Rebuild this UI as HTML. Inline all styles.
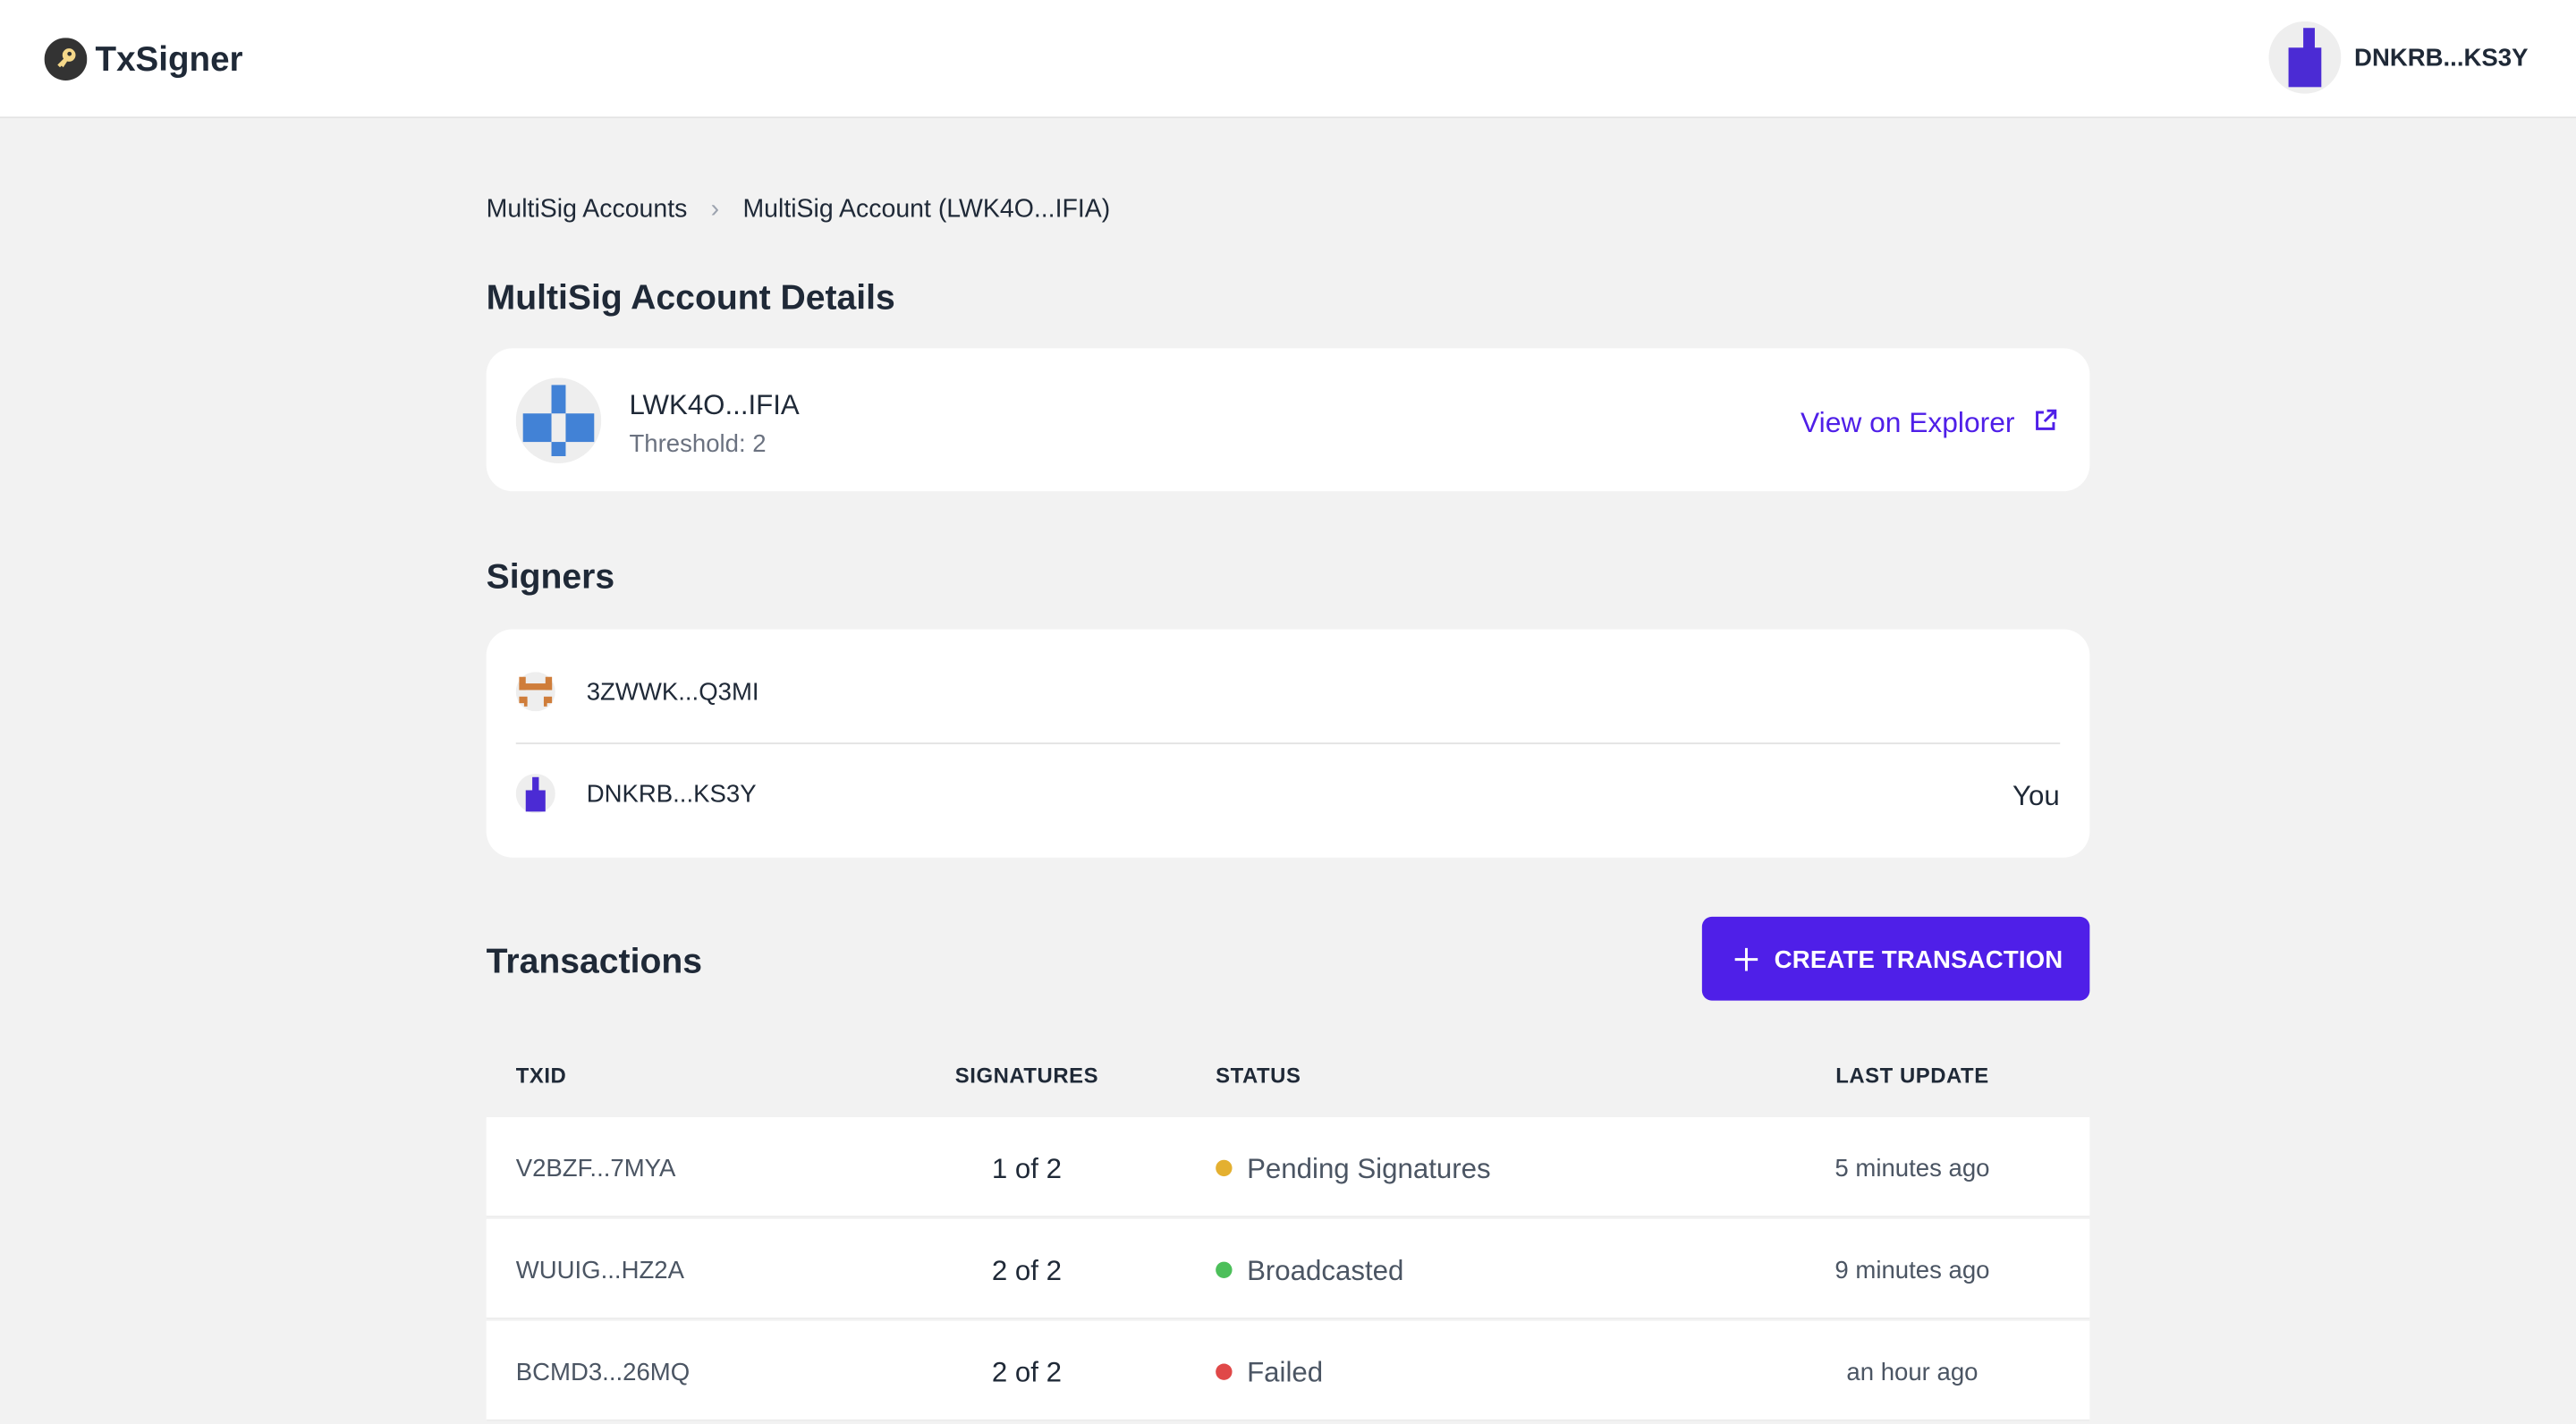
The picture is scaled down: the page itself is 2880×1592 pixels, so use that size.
<!DOCTYPE html>
<html><head><meta charset="utf-8"><style>
*{margin:0;padding:0;box-sizing:border-box}
html,body{width:2880px;height:1592px;overflow:hidden;background:#f2f2f2;font-family:"Liberation Sans",sans-serif;color:#1f2937}
#w{position:absolute;left:0;top:0;width:1568px;height:867px;transform:scale(1.836735);transform-origin:0 0}
.a{position:absolute}
.hdr{left:0;top:0;width:1568px;height:72px;background:#fff;border-bottom:1px solid #e3e3e3}
.card{background:#fff;border-radius:16px}
.h2{font-size:21.3px;font-weight:bold;color:#1f2937}
.th{font-size:13px;font-weight:bold;letter-spacing:.3px;color:#1f2937}
.row{left:296px;width:976px;height:61px;background:#fff;border-bottom:1px solid #ececec}
.row div{position:absolute;top:1px;line-height:61px}
.tx{left:18px;font-size:15px;color:#4b5563}
.sg{left:260px;width:138px;text-align:center;font-size:17px}
.st{left:444px;font-size:17px;color:#4b5563}
.st i{display:inline-block;width:10px;height:10px;border-radius:50%;margin-right:9px;vertical-align:1px}
.lu{left:790px;width:156px;text-align:center;font-size:15px;color:#4b5563}
</style></head><body><div id="w">
<div class="a hdr"></div>
<svg class="a" style="left:27px;top:23px" width="26" height="26" viewBox="0 0 26 26"><circle cx="13" cy="13" r="13" fill="#333"/><circle cx="15" cy="10.5" r="4" fill="#f5d88a"/><circle cx="15.3" cy="9.8" r="1.3" fill="#333"/><path d="M12.5 12 L8 16.5 L9.5 18 L10.5 17 L11.5 18 L13.8 14.5Z" fill="#f5d88a"/></svg>
<div class="a" style="left:58px;top:25px;font-size:21px;font-weight:bold;color:#1f2937">TxSigner</div>
<svg class="a" style="left:1381px;top:13px" width="44" height="44" viewBox="0 0 44 44"><circle cx="22" cy="22" r="22" fill="#eee"/><rect x="21" y="4" width="7" height="13" fill="#4b2bd4"/><rect x="12" y="16" width="20" height="24" fill="#4b2bd4"/></svg>
<div class="a" style="left:1433px;top:27px;font-size:15px;font-weight:bold">DNKRB...KS3Y</div>

<div class="a" style="left:296px;top:119px;font-size:15.5px">MultiSig Accounts <span style="color:#9ca3af;margin:0 10px">›</span> MultiSig Account (LWK4O...IFIA)</div>
<div class="a h2" style="left:296px;top:169px">MultiSig Account Details</div>
<div class="a card" style="left:296px;top:212px;width:976px;height:87px"></div>
<svg class="a" style="left:314px;top:230px" width="52" height="52" viewBox="0 0 48 48"><circle cx="24" cy="24" r="24" fill="#eee"/><g fill="#4282d6"><rect x="20" y="4" width="8" height="16"/><rect x="20" y="36" width="8" height="8"/><rect x="4" y="20" width="16" height="16"/><rect x="28" y="20" width="16" height="16"/></g></svg>
<div class="a" style="left:383px;top:237px;font-size:17px">LWK4O...IFIA</div>
<div class="a" style="left:383px;top:262px;font-size:15px;color:#6b7280">Threshold: 2</div>
<div class="a" style="left:1096px;top:247px;font-size:17.3px;color:#4f1fe8">View on Explorer</div>
<svg class="a" style="left:1238px;top:249px" width="14" height="14" viewBox="0 0 14 14" fill="none" stroke="#4f1fe8" stroke-width="1.6"><path d="M6 2H2v10h10V8"/><path d="M8 1h5v5M13 1L6.5 7.5"/></svg>

<div class="a h2" style="left:296px;top:339px">Signers</div>
<div class="a card" style="left:296px;top:383px;width:976px;height:139px"></div>
<svg class="a" style="left:314px;top:409px" width="24" height="24" viewBox="0 0 24 24"><circle cx="12" cy="12" r="12" fill="#eee"/><g fill="#cf7d3a"><rect x="2" y="3" width="4" height="8"/><rect x="18" y="3" width="4" height="8"/><rect x="2" y="7" width="20" height="4"/><rect x="2" y="15" width="5" height="4"/><rect x="17" y="15" width="5" height="4"/><rect x="5" y="17" width="2" height="4"/><rect x="17" y="17" width="2" height="4"/></g></svg>
<div class="a" style="left:357px;top:413px;font-size:15px">3ZWWK...Q3MI</div>
<div class="a" style="left:314px;top:452px;width:940px;height:1px;background:#e3e3e3"></div>
<svg class="a" style="left:314px;top:471px" width="24" height="24" viewBox="0 0 24 24"><circle cx="12" cy="12" r="12" fill="#eee"/><rect x="10" y="2" width="4" height="9" fill="#4b2bd4"/><rect x="6" y="10" width="12" height="13" fill="#4b2bd4"/></svg>
<div class="a" style="left:357px;top:475px;font-size:15px">DNKRB...KS3Y</div>
<div class="a" style="left:1225px;top:475px;font-size:17px">You</div>

<div class="a h2" style="left:296px;top:573px">Transactions</div>
<div class="a" style="left:1036px;top:558px;width:236px;height:51px;background:#4f1fe8;border-radius:6px;color:#fff;font-size:15px;font-weight:bold;line-height:53px;padding-left:44px;letter-spacing:.1px">CREATE TRANSACTION</div>
<svg class="a" style="left:1056px;top:577px" width="14" height="14" viewBox="0 0 14 14" stroke="#fff" stroke-width="1.6"><path d="M7 0v14M0 7h14"/></svg>

<div class="a th" style="left:314px;top:647px">TXID</div>
<div class="a th" style="left:556px;top:647px;width:138px;text-align:center">SIGNATURES</div>
<div class="a th" style="left:740px;top:647px">STATUS</div>
<div class="a th" style="left:1086px;top:647px;width:156px;text-align:center">LAST UPDATE</div>

<div class="a row" style="top:680px"><div class="tx">V2BZF...7MYA</div><div class="sg">1 of 2</div><div class="st"><i style="background:#e4b030"></i>Pending Signatures</div><div class="lu">5 minutes ago</div></div>
<div class="a row" style="top:742px"><div class="tx">WUUIG...HZ2A</div><div class="sg">2 of 2</div><div class="st"><i style="background:#4cbf5a"></i>Broadcasted</div><div class="lu">9 minutes ago</div></div>
<div class="a row" style="top:804px"><div class="tx">BCMD3...26MQ</div><div class="sg">2 of 2</div><div class="st"><i style="background:#e04848"></i>Failed</div><div class="lu">an hour ago</div></div>
</div></body></html>
